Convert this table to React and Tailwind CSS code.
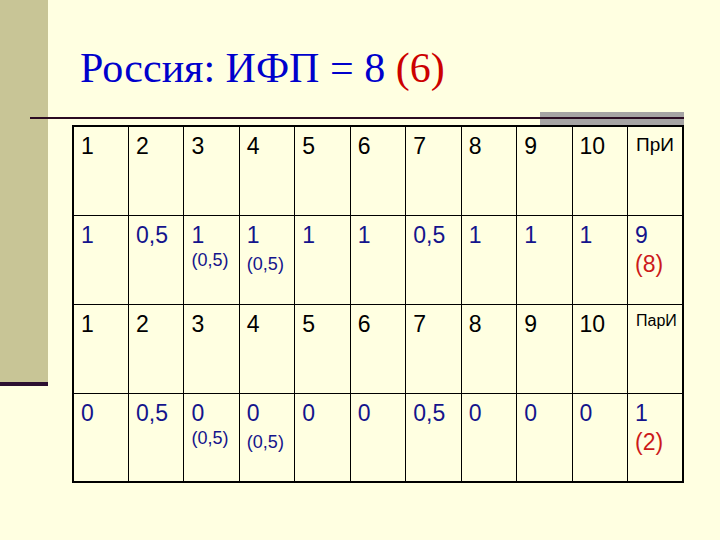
import React from "react";

const sans = { fontFamily: '"Liberation Sans", Arial, sans-serif' };
const serif = { fontFamily: '"Liberation Serif", "Times New Roman", serif' };

const nums = ["1", "2", "3", "4", "5", "6", "7", "8", "9", "10"];

const rowA = [
  { m: "1" },
  { m: "0,5" },
  { m: "1", s: "(0,5)" },
  { m: "1", s: "(0,5)", low: true },
  { m: "1" },
  { m: "1" },
  { m: "0,5" },
  { m: "1" },
  { m: "1" },
  { m: "1" },
  { m: "9", r: "(8)" },
];

const rowB = [
  { m: "0" },
  { m: "0,5" },
  { m: "0", s: "(0,5)" },
  { m: "0", s: "(0,5)", low: true },
  { m: "0" },
  { m: "0" },
  { m: "0,5" },
  { m: "0" },
  { m: "0" },
  { m: "0" },
  { m: "1", r: "(2)" },
];

function HeaderRow({ label, small }) {
  return (
    <tr className="h-[89px]">
      {nums.map((n) => (
        <td key={n} className="border border-black align-top pl-[7px] pt-[8px]">
          <div className="text-[23px] leading-none text-black">{n}</div>
        </td>
      ))}
      <td className="border border-black align-top pl-[8px] pt-[8px]">
        <div className={small ? "text-[16px] leading-none text-black" : "text-[19px] leading-none text-black"}>
          {label}
        </div>
      </td>
    </tr>
  );
}

function DataRow({ cells }) {
  return (
    <tr className="h-[89px]">
      {cells.map((c, i) => (
        <td key={i} className="border border-black align-top pl-[7px] pt-[8px]">
          <div className="text-[23px] leading-none text-[#14148c]">{c.m}</div>
          {c.s && (
            <div className={c.low ? "mt-[8px] text-[18px] leading-none text-[#14148c]" : "mt-[4px] text-[18px] leading-none text-[#14148c]"}>
              {c.s}
            </div>
          )}
          {c.r && <div className="mt-[6px] text-[23px] leading-none text-[#cc1a1a]">{c.r}</div>}
        </td>
      ))}
    </tr>
  );
}

export default function App() {
  return (
    <div className="w-[720px] h-[540px] bg-[#ffffe1] flex overflow-hidden" style={sans}>
      <div className="w-[48px] flex flex-col">
        <div className="h-[382px] bg-[#c8c596]"></div>
        <div className="h-[4px] bg-[#2c0f30]"></div>
      </div>
      <div className="flex-1 flex flex-col pt-[47px]">
        <h1 className="pl-[32px] text-[42px] leading-none text-[#0000cc] whitespace-nowrap" style={serif}>
          Россия: ИФП = 8 <span className="text-[#cc0000]">(6)</span>
        </h1>
        <div className="mt-[23px] ml-[-18px] w-[654px] h-[13px] flex">
          <div className="flex-1 pt-[5px]">
            <div className="h-[2px] bg-[#2b0b22]"></div>
          </div>
          <div className="w-[144px] bg-[#a6a4a4] pt-[5px]">
            <div className="h-[2px] bg-[#2b0b22]"></div>
          </div>
        </div>
        <table className="ml-[24px] w-[612px] table-fixed border-collapse border-2 border-black">
          <tbody>
            <HeaderRow label="ПрИ" />
            <DataRow cells={rowA} />
            <HeaderRow label="ПарИ" small />
            <DataRow cells={rowB} />
          </tbody>
        </table>
      </div>
    </div>
  );
}
